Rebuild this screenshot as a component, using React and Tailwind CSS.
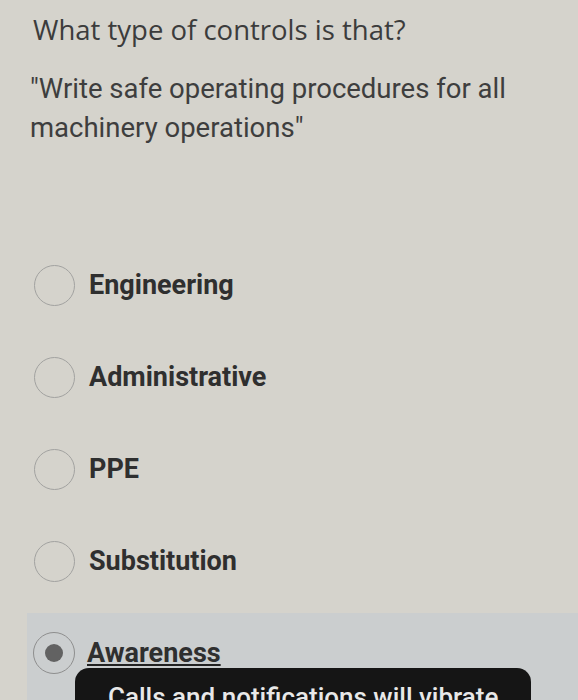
export default function App() {
  const options = ["Engineering", "Administrative", "PPE", "Substitution"];
  return (
    <div className="relative w-[578px] h-[700px] overflow-hidden bg-[#d5d3cc] text-[#3a3a3a]">
      <div className="pl-[33px] pt-[12px]">
        <h1 className="text-[27.5px] leading-[36px] text-[#3c3c3c]" style={{ fontFamily: '"Open Sans", sans-serif' }}>
          What type of controls is that?
        </h1>
      </div>
      <div className="pl-[30px] pt-[21px] pr-[20px]" style={{ fontFamily: 'Roboto, sans-serif' }}>
        <p className="text-[27.5px] leading-[39px] text-[#3e3e3e]">
          "Write safe operating procedures for all machinery operations"
        </p>
      </div>
      <div className="flex flex-col pt-[92px] pl-[34px]" style={{ fontFamily: 'Roboto, sans-serif' }}>
        {options.map((o) => (
          <div key={o} className="flex items-center h-[92px] gap-[14px]">
            <span className="w-[41px] h-[41px] rounded-full border-[1.5px] border-[#a2a2a0]" />
            <span className="text-[27px] font-bold text-[#2f2f2f] leading-none">{o}</span>
          </div>
        ))}
      </div>
      <div className="ml-[27px] mt-[6px] h-[200px] bg-[#cbcecf]" style={{ fontFamily: 'Roboto, sans-serif' }}>
        <div className="flex items-center h-[80px] pl-[6px] gap-[12px]">
          <span className="w-[42px] h-[42px] rounded-full border-[1.5px] border-[#8e8e8e] flex items-center justify-center">
            <span className="w-[18px] h-[18px] rounded-full bg-[#626262]" />
          </span>
          <span className="text-[27px] font-bold text-[#2f2f2f] leading-none underline decoration-[#222] decoration-2 underline-offset-2">Awareness</span>
        </div>
      </div>
      <div className="absolute left-[75px] top-[668px] w-[456px] h-[80px] rounded-[14px] bg-[#151515] px-[33px] pt-[10px]" style={{ fontFamily: 'Roboto, sans-serif' }}>
        <p className="text-[26px] font-medium text-[#e8e8e8] whitespace-nowrap">Calls and notifications will vibrate</p>
      </div>
    </div>
  );
}
